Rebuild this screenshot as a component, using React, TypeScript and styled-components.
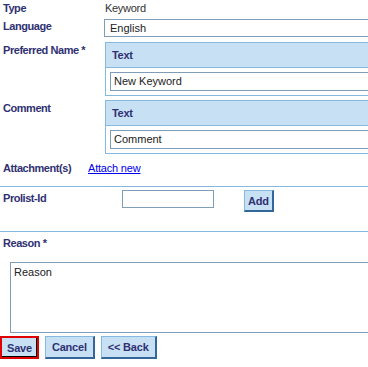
import React from "react";
import styled, { createGlobalStyle, css } from "styled-components";

const GlobalStyle = createGlobalStyle`
  html, body {
    margin: 0;
    padding: 0;
    background: #ffffff;
    overflow: hidden;
  }
  body {
    font-family: "Liberation Sans", Arial, sans-serif;
    font-size: 11px;
  }
`;

const navy = "#2f3172";
const lineBlue = "#86b9e2";
const headBlue = "#c8e0f4";
const inputBorder = "#7f9db9";

const Form = styled.div`
  width: 400px;
  display: flex;
  flex-direction: column;
`;

const FieldRow = styled.div<{ $top?: number }>`
  display: grid;
  grid-template-columns: 104px 1fr;
  margin-top: ${(p) => p.$top ?? 0}px;
`;

const Label = styled.div<{ $pad?: number }>`
  padding-left: 3px;
  padding-top: ${(p) => p.$pad ?? 0}px;
  color: ${navy};
  font-weight: bold;
  letter-spacing: -0.45px;
  line-height: 13px;
`;

const PlainValue = styled.div`
  padding-top: 2px;
  padding-left: 1px;
  color: #333333;
  letter-spacing: -0.3px;
  line-height: 13px;
`;

const Input = styled.div<{ $width?: number }>`
  box-sizing: border-box;
  height: 18px;
  border: 1px solid ${inputBorder};
  ${(p) => (p.$width ? css`width: ${p.$width}px;` : "")}
  padding: 0 5px;
  line-height: 16px;
  color: #222222;
  background: #ffffff;
`;

const TextGroup = styled.div`
  margin-left: 1px;
  border: 1px solid ${lineBlue};
  border-right: none;
  padding-bottom: 4px;
`;

const GroupHeader = styled.div`
  height: 24px;
  background: ${headBlue};
  border-bottom: 1px solid ${lineBlue};
  padding-left: 6px;
  line-height: 24px;
  color: ${navy};
  font-weight: bold;
  letter-spacing: -0.3px;
  margin-bottom: 4px;
`;

const GroupInput = styled(Input)`
  height: 19px;
  margin-left: 4px;
  padding-left: 3px;
  line-height: 17px;
`;

const AttachRow = styled.div`
  display: flex;
  align-items: baseline;
  margin-top: 8px;
  height: 24px;
`;

const AttachLabel = styled(Label)`
  width: 85px;
  flex-shrink: 0;
`;

const Link = styled.a`
  color: #0000ee;
  text-decoration: underline;
  letter-spacing: -0.2px;
  line-height: 13px;
`;

const Divider = styled.div`
  height: 1px;
  background: ${lineBlue};
`;

const ProlistRow = styled.div`
  display: flex;
  align-items: flex-start;
  padding-top: 3px;
  height: 41px;
`;

const ProlistLabel = styled(Label)`
  width: 119px;
  flex-shrink: 0;
  padding-top: 2px;
`;

const Button = styled.button<{ $primary?: boolean }>`
  box-sizing: border-box;
  height: 23px;
  padding: 0 6px;
  font-family: "Liberation Sans", Arial, sans-serif;
  font-size: 11px;
  font-weight: bold;
  letter-spacing: -0.2px;
  color: ${navy};
  background: ${headBlue};
  border: 2px solid;
  border-color: ${lineBlue} #336699 #336699 ${lineBlue};
  border-top-width: 1px;
  border-left-width: 1px;
  cursor: pointer;
  ${(p) =>
    p.$primary &&
    css`
      padding: 0 5px;
      border: 2px solid #e00000;
      box-shadow: inset -1px -1px 0 #000000;
    `}
`;

const AddButton = styled(Button)`
  height: 22px;
  margin-left: 30px;
  padding: 0 3px;
`;

const ReasonBlock = styled.div`
  padding-top: 5px;
`;

const TextArea = styled.div`
  box-sizing: border-box;
  margin: 12px 0 0 10px;
  height: 71px;
  border: 1px solid ${inputBorder};
  padding: 3px 3px;
  color: #222222;
  line-height: 13px;
`;

const ButtonBar = styled.div`
  display: flex;
  gap: 6px;
  margin-top: 3px;
`;

export default function App() {
  return (
    <>
      <GlobalStyle />
      <Form>
        <FieldRow>
          <Label $pad={2}>Type</Label>
          <PlainValue>Keyword</PlainValue>
        </FieldRow>
        <FieldRow $top={4}>
          <Label $pad={1}>Language</Label>
          <Input>English</Input>
        </FieldRow>
        <FieldRow $top={5}>
          <Label $pad={2}>Preferred Name *</Label>
          <TextGroup>
            <GroupHeader>Text</GroupHeader>
            <GroupInput>New Keyword</GroupInput>
          </TextGroup>
        </FieldRow>
        <FieldRow $top={4}>
          <Label $pad={2}>Comment</Label>
          <TextGroup>
            <GroupHeader>Text</GroupHeader>
            <GroupInput>Comment</GroupInput>
          </TextGroup>
        </FieldRow>
        <AttachRow>
          <AttachLabel>Attachment(s)</AttachLabel>
          <Link href="#">Attach new</Link>
        </AttachRow>
        <Divider />
        <ProlistRow>
          <ProlistLabel>Prolist-Id</ProlistLabel>
          <Input $width={92} />
          <AddButton>Add</AddButton>
        </ProlistRow>
        <Divider />
        <ReasonBlock>
          <Label>Reason *</Label>
          <TextArea>Reason</TextArea>
        </ReasonBlock>
        <ButtonBar>
          <Button $primary>Save</Button>
          <Button>Cancel</Button>
          <Button>&lt;&lt; Back</Button>
        </ButtonBar>
      </Form>
    </>
  );
}
